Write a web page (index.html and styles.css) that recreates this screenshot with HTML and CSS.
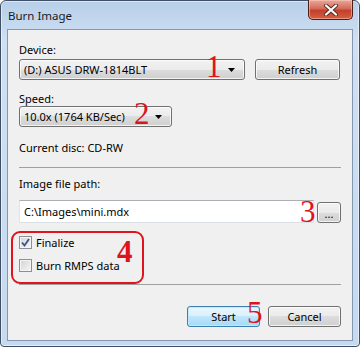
FILE: index.html
```html
<!DOCTYPE html>
<html lang="en">
<head>
  <meta charset="UTF-8" />
  <title>Burn Image</title>
  <link rel="stylesheet" href="styles.css">
</head>
<body>
  <div class="window">
    <div class="titlebar">
      <span class="title">Burn Image</span>
      <div class="close">
        <svg width="16" height="12" viewBox="0 0 16 12">
          <path d="M3 1.5 L13 10.5 M13 1.5 L3 10.5" stroke="#5b2a24" stroke-width="4" stroke-linecap="round"/>
          <path d="M3 1.5 L13 10.5 M13 1.5 L3 10.5" stroke="#fff" stroke-width="2.2" stroke-linecap="round"/>
        </svg>
      </div>
    </div>
    <div class="client">
      <div class="label label-device">Device:</div>
      <div class="row row-device">
        <div class="combo combo-device">(D:) ASUS DRW-1814BLT<span class="num num-1">1</span></div>
        <div class="btn btn-refresh">Refresh</div>
      </div>

      <div class="label label-speed">Speed:</div>
      <div class="row">
        <div class="combo combo-speed">10.0x (1764 KB/Sec)<span class="num num-2">2</span></div>
      </div>

      <div class="label label-disc">Current disc: CD-RW</div>
      <div class="sep sep-top"></div>

      <div class="label label-path">Image file path:</div>
      <div class="row row-path">
        <div class="input">C:\Images\mini.mdx</div>
        <div class="btn btn-browse">...</div>
        <span class="num num-3">3</span>
      </div>

      <div class="checks">
        <div class="ring"></div>
        <div class="check-row">
          <span class="box checked">
            <svg width="9" height="9" viewBox="0 0 9 9"><path d="M1 4.5 L3.5 7.5 L8 1" fill="none" stroke="#3d5489" stroke-width="1.8"/></svg>
          </span>
          <span>Finalize</span>
        </div>
        <div class="check-row">
          <span class="box"></span>
          <span>Burn RMPS data</span>
        </div>
        <span class="num num-4">4</span>
      </div>
      <div class="sep sep-bottom"></div>

      <div class="row row-buttons">
        <div class="btn btn-default">Start<span class="num num-5">5</span></div>
        <div class="btn">Cancel</div>
      </div>
    </div>
  </div>
</body>
</html>
```

FILE: styles.css
```css
* {
  box-sizing: border-box;
}
body {
  margin: 0;
  font-family: "Noto Sans", sans-serif;
  font-size: 11px;
  color: #000;
  background: #fff;
}
.window {
  width: 360px;
  height: 347px;
  border: 1px solid #3f5066;
  border-radius: 6px 6px 4px 4px;
  background: linear-gradient(#b7cfe9, #cfe0f3 40px, #c6d9ef);
  box-shadow: inset 0 0 0 1px rgba(255,255,255,0.5);
  padding: 0 6px 5px;
  display: flex;
  flex-direction: column;
}
.titlebar {
  height: 28px;
  display: flex;
  align-items: flex-start;
}
.title {
  padding: 7px 0 0 1px;
  font-size: 11.5px;
  color: #1a1a1a;
}
.close {
  margin-left: auto;
  margin-top: -1px;
  width: 45px;
  height: 20px;
  border: 1px solid #4d1d17;
  border-top: none;
  border-radius: 0 0 5px 5px;
  background: linear-gradient(#e9a999, #d46b5a 45%, #c3402d 55%, #d3603f);
  box-shadow: inset 0 0 0 1px rgba(255,210,200,0.5);
  display: flex;
  align-items: center;
  justify-content: center;
}
.client {
  height: 312px;
  border: 1px solid #8497b0;
  background: #f0f0f0;
  padding: 12px 11px 0 11px;
  display: flex;
  flex-direction: column;
}
.label {
  line-height: 15px;
}
.row {
  display: flex;
  position: relative;
}
.row-device {
  margin-top: 2px;
  gap: 10px;
}
.label-speed {
  margin-top: 11px;
}
.label-disc {
  margin-top: 13px;
}
.sep {
  height: 1px;
  background: #a0a0a0;
  flex-shrink: 0;
}
.sep-top {
  margin-top: 12px;
}
.label-path {
  margin-top: 8px;
}
.row-path {
  margin-top: 9px;
  align-items: flex-end;
  gap: 3px;
}
.combo, .btn {
  height: 21px;
  border: 1px solid #707070;
  border-radius: 3px;
  background: linear-gradient(#f2f2f2, #ebebeb 50%, #dddddd 50%, #cfcfcf);
  box-shadow: inset 0 0 0 1px rgba(255,255,255,0.75);
  display: flex;
  align-items: center;
  position: relative;
  flex-shrink: 0;
}
.combo {
  padding-left: 4px;
}
.combo::after {
  content: "";
  position: absolute;
  right: 9px;
  top: 8px;
  width: 7px;
  height: 4px;
  background: #000;
  clip-path: polygon(0 0, 100% 0, 50% 100%);
}
.combo-device {
  width: 226px;
}
.combo-speed {
  width: 153px;
}
.btn {
  justify-content: center;
}
.btn-refresh {
  width: 85px;
}
.input {
  width: 296px;
  height: 23px;
  background: #fff;
  border: 1px solid #dbdfe6;
  border-top-color: #abadb3;
  border-left-color: #e2e3ea;
  padding-left: 4px;
  display: flex;
  align-items: center;
}
.btn-browse {
  width: 24px;
  margin-left: auto;
  align-items: flex-end;
  padding-bottom: 3px;
  line-height: 10px;
}
.checks {
  position: relative;
  margin-top: 12px;
  display: flex;
  flex-direction: column;
  gap: 8px;
}
.check-row {
  display: flex;
  align-items: center;
  gap: 4px;
  line-height: 15px;
}
.box {
  width: 13px;
  height: 13px;
  border: 1px solid #8e8f8f;
  background: linear-gradient(135deg, #d2d4d8, #f6f6f6);
  box-shadow: inset 0 0 0 1px #f4f4f4;
  display: flex;
  align-items: center;
  justify-content: center;
}
.ring {
  position: absolute;
  left: -8px;
  top: -4px;
  width: 133px;
  height: 53px;
  border: 2px solid #e0141e;
  border-radius: 9px;
}
.sep-bottom {
  margin-top: 11px;
}
.row-buttons {
  margin-top: 21px;
  justify-content: flex-end;
  gap: 8px;
}
.row-buttons .btn {
  width: 73px;
}
.btn-default {
  border-color: #3c7fb1;
  background: linear-gradient(#eaf6fd, #d9f0fc 50%, #bee6fd 50%, #a7d9f5);
  box-shadow: inset 0 0 0 1px #bfeafd;
}
.num {
  position: absolute;
  font-family: "Liberation Serif", serif;
  font-size: 31px;
  line-height: 1;
  color: #dc141c;
}
.num-1 {
  left: 186px;
  top: -9px;
}
.num-2 {
  left: 114px;
  top: -9px;
}
.num-3 {
  left: 281px;
  top: -4px;
}
.num-4 {
  left: 98px;
  top: 1px;
  font-weight: bold;
}
.num-5 {
  left: 59px;
  top: -10px;
}
```
